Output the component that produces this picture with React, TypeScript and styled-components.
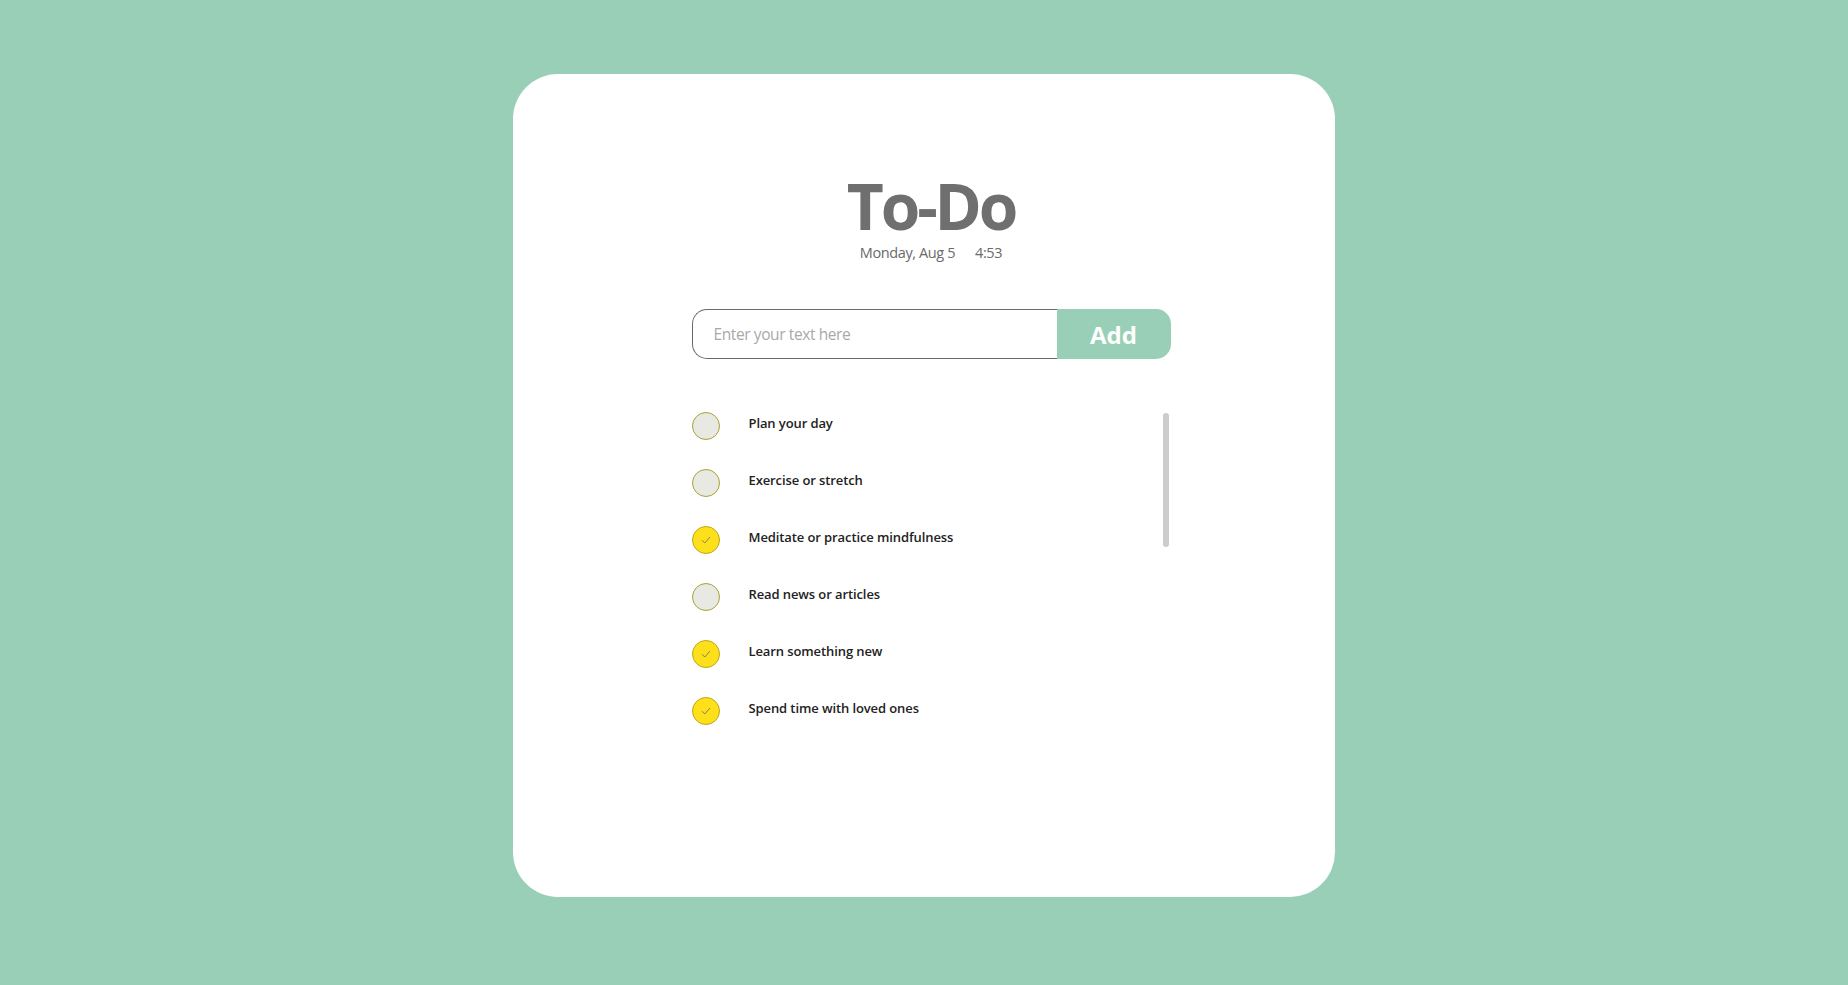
import { useState } from 'react'
import styled, { createGlobalStyle } from 'styled-components'

const GlobalStyle = createGlobalStyle`
  html, body {
    margin: 0;
    padding: 0;
    background: #98cfb6;
  }
  body {
    font-family: 'Open Sans', 'Noto Sans', sans-serif;
  }
`

const Page = styled.div`
  min-height: 985px;
  box-sizing: border-box;
  padding-top: 74px;
  display: flex;
  justify-content: center;
  align-items: flex-start;
`

const Card = styled.div`
  width: 822px;
  height: 823px;
  box-sizing: border-box;
  background: #fff;
  border-radius: 45px;
  padding: 98px 0 0 14px;
  display: flex;
  flex-direction: column;
  align-items: center;
`

const Title = styled.h1`
  margin: 0;
  font-size: 64px;
  line-height: 68px;
  font-weight: 700;
  color: #6f6f6f;
  letter-spacing: -3.2px;
`

const DateLine = styled.div`
  margin-top: 3px;
  font-size: 14.5px;
  line-height: 20px;
  font-weight: 400;
  color: #6a6a6a;
  letter-spacing: -0.4px;
  display: flex;
  gap: 20px;
`

const Content = styled.div`
  width: 479px;
  margin-top: 46px;
  display: flex;
  flex-direction: column;
`

const Form = styled.form`
  display: flex;
  height: 50px;
`

const Input = styled.input`
  flex: 1;
  min-width: 0;
  box-sizing: border-box;
  height: 50px;
  border: 1px solid #6a6a6a;
  border-right: none;
  border-radius: 15px 0 0 15px;
  padding: 0 0 0 21px;
  font-family: inherit;
  font-size: 15.5px;
  letter-spacing: -0.4px;
  color: #333;
  outline: none;
  &::placeholder {
    color: #a9a9a9;
  }
`

const AddButton = styled.button`
  width: 114px;
  height: 50px;
  border: none;
  border-radius: 0 15px 15px 0;
  background: #98cfb6;
  color: #fff;
  font-family: inherit;
  font-size: 24px;
  font-weight: 700;
  cursor: pointer;
`

const ListBox = styled.div`
  position: relative;
  margin-top: 53px;
  height: 327px;
`

const List = styled.ul`
  list-style: none;
  margin: 0;
  padding: 0;
`

const ScrollThumb = styled.div`
  position: absolute;
  top: 1px;
  right: 2px;
  width: 6px;
  height: 134px;
  border-radius: 3px;
  background: #cccccc;
`

const Item = styled.li`
  display: flex;
  align-items: center;
  height: 28px;
  margin-bottom: 29px;
  gap: 29px;
  cursor: pointer;
`

const Check = styled.span<{ $done: boolean }>`
  flex: none;
  width: 28px;
  height: 28px;
  box-sizing: border-box;
  border-radius: 50%;
  border: 1px solid ${(p) => (p.$done ? '#c0a61c' : '#aaa234')};
  background: ${(p) => (p.$done ? '#fde01a' : '#e9e9e3')};
  display: flex;
  align-items: center;
  justify-content: center;
`

const Label = styled.span`
  font-size: 13px;
  font-weight: 600;
  color: #222;
  letter-spacing: -0.1px;
  margin-top: -6px;
`

const initialTodos = [
  { text: 'Plan your day', done: false },
  { text: 'Exercise or stretch', done: false },
  { text: 'Meditate or practice mindfulness', done: true },
  { text: 'Read news or articles', done: false },
  { text: 'Learn something new', done: true },
  { text: 'Spend time with loved ones', done: true }
]

const App = () => {
  const [todos, setTodos] = useState(initialTodos)
  const [text, setText] = useState('')

  const toggle = (i: number) => {
    setTodos(todos.map((t, j) => (j === i ? { ...t, done: !t.done } : t)))
  }

  const add = (e: React.FormEvent) => {
    e.preventDefault()
    if (!text.trim()) return
    setTodos([...todos, { text: text.trim(), done: false }])
    setText('')
  }

  return (
    <Page>
      <GlobalStyle />
      <Card>
        <Title>To-Do</Title>
        <DateLine>
          <span>Monday, Aug 5</span>
          <span>4:53</span>
        </DateLine>
        <Content>
          <Form onSubmit={add}>
            <Input
              placeholder="Enter your text here"
              value={text}
              onChange={(e) => setText(e.target.value)}
            />
            <AddButton type="submit">Add</AddButton>
          </Form>
          <ListBox>
            <List>
              {todos.map((t, i) => (
                <Item key={i} onClick={() => toggle(i)}>
                  <Check $done={t.done}>
                    {t.done && (
                      <svg width="10" height="8" viewBox="0 0 10 8">
                        <path d="M1 4.2 L3.8 7 L9 1" fill="none" stroke="#8a8450" strokeWidth="1" />
                      </svg>
                    )}
                  </Check>
                  <Label>{t.text}</Label>
                </Item>
              ))}
            </List>
            <ScrollThumb />
          </ListBox>
        </Content>
      </Card>
    </Page>
  )
}

export default App
